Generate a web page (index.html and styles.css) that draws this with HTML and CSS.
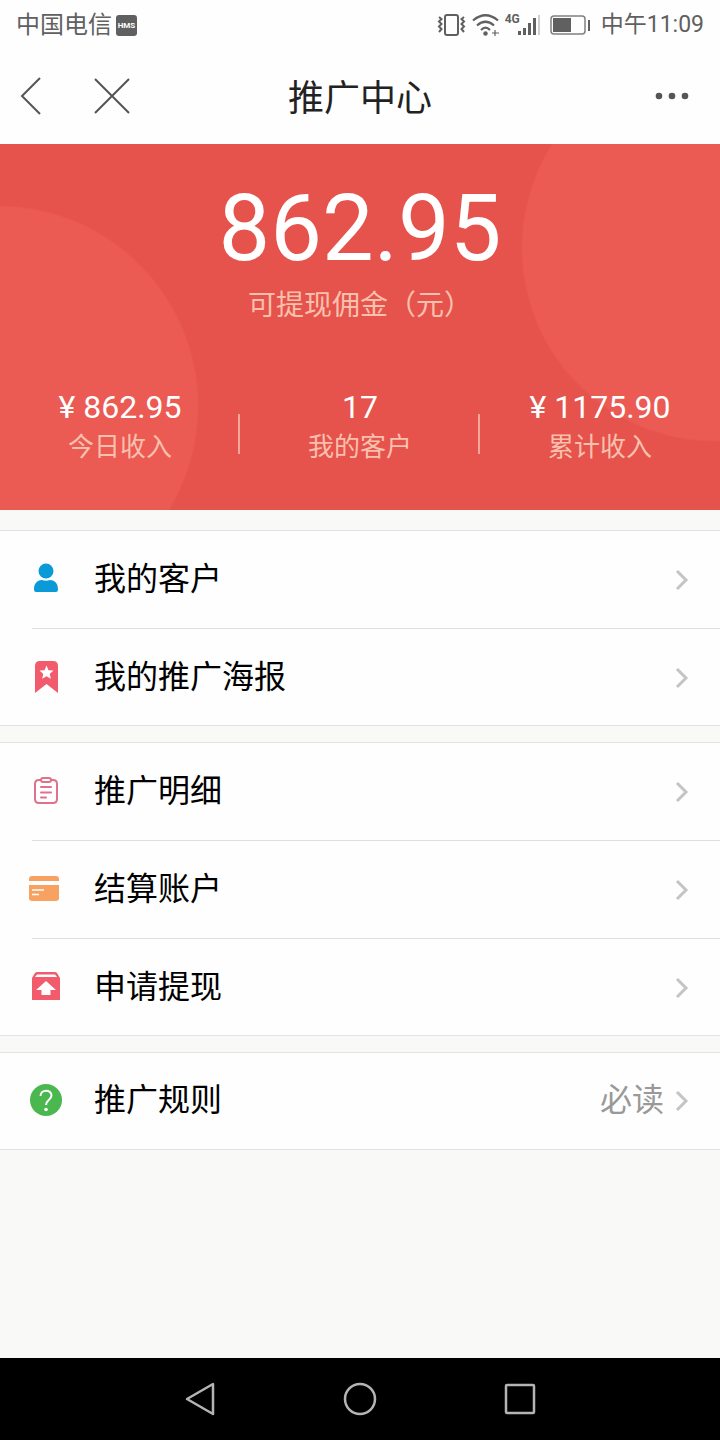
FILE: index.html
```html
<!DOCTYPE html>
<html lang="zh-CN">
<head>
  <meta charset="UTF-8" />
  <meta name="viewport" content="width=device-width, initial-scale=1.0" />
  <title>推广中心</title>
  <link rel="stylesheet" href="styles.css">
</head>
<body>
  <div class="status">
    <span>中国电信</span>
    <span class="hms">HMS</span>
    <div class="status-icons">
      <svg width="30" height="24" viewBox="0 0 30 24" fill="none" stroke="#606060" stroke-width="2">
        <rect x="8" y="2" width="13" height="20" rx="2" />
        <path d="M2 4L4.500 6L2 8.500L4.500 11L2 13.500L4.500 16L2 19M27 4L24.500 6L27 8.500L24.500 11L27 13.500L24.500 16L27 19" />
      </svg>
      <svg width="28" height="24" viewBox="0 0 28 24" fill="none" stroke="#606060" stroke-width="2.200">
        <path d="M1 7.500Q13.500 -3 26 7.500M5 12.500Q13.500 5 22 12.500M9 17Q13.500 12.500 18 17" />
        <circle cx="13.500" cy="20.500" r="2.200" fill="#606060" stroke="none" />
        <path d="M23 17V23M20 20H27" stroke-width="1.200" />
      </svg>
      <span class="net">4G</span>
      <svg class="signal" width="22" height="24" viewBox="0 0 22 24" fill="#606060">
        <rect x="0" y="18" width="3" height="4" />
        <rect x="5" y="15" width="3" height="7" />
        <rect x="10" y="10" width="3" height="12" />
        <rect x="15" y="5" width="3" height="17" />
        <rect x="20" y="2" width="2" height="20" fill="#cfcfcf" />
      </svg>
      <svg class="battery" width="41" height="24" viewBox="0 0 41 24">
        <rect x="1" y="3" width="34" height="18" rx="3" fill="none" stroke="#808080" stroke-width="1.500" />
        <rect x="3" y="5" width="18" height="14" fill="#606060" />
        <rect x="38" y="7" width="2" height="11" fill="#606060" />
      </svg>
    </div>
    <span class="time">中午11:09</span>
  </div>

  <header class="header">
    <div class="header-left">
      <button class="icon-btn" aria-label="返回">
        <svg width="40" height="40" viewBox="0 0 40 40" fill="none" stroke="#555" stroke-width="2"><path d="M28 2L10 20L28 38" /></svg>
      </button>
      <button class="icon-btn" aria-label="关闭">
        <svg width="40" height="40" viewBox="0 0 40 40" fill="none" stroke="#555" stroke-width="2"><path d="M3 3L37 37M37 3L3 37" /></svg>
      </button>
    </div>
    <h1>推广中心</h1>
    <div class="header-right">
      <button class="icon-btn" aria-label="更多">
        <svg width="40" height="40" viewBox="0 0 40 40" fill="#555"><circle cx="7" cy="20" r="3.300" /><circle cx="20" cy="20" r="3.300" /><circle cx="33" cy="20" r="3.300" /></svg>
      </button>
    </div>
  </header>

  <section class="hero">
    <div class="amount">862.95</div>
    <div class="amount-label">可提现佣金（元）</div>
    <div class="stats">
      <div class="stat">
        <div class="stat-num">¥ 862.95</div>
        <div class="stat-label">今日收入</div>
      </div>
      <div class="stat">
        <div class="stat-num">17</div>
        <div class="stat-label">我的客户</div>
      </div>
      <div class="stat">
        <div class="stat-num">¥ 1175.90</div>
        <div class="stat-label">累计收入</div>
      </div>
    </div>
  </section>

  <main>
    <nav class="group">
      <a class="row" href="#">
        <svg class="icon" viewBox="0 0 32 32" fill="#0b9ad8"><circle cx="16" cy="8" r="7.500" /><path d="M4 26C4 20 8 17 12 17Q16 18.500 20 17C24 17 28 20 28 26Q28 29 26 29H6Q4 29 4 26Z" /></svg>
        <span class="name">我的客户</span>
        <svg class="arrow" viewBox="0 0 16 24"><path d="M3 3L12 12L3 21" /></svg>
      </a>
      <a class="row" href="#">
        <svg class="icon" viewBox="0 0 32 32"><path d="M5 32V5Q5 0 10 0H23Q28 0 28 5V32L16.500 23Z" fill="#f15b6c" /><path d="M16.500 4.500L18.500 9.200L23.500 9.600L19.700 12.900L20.900 17.800L16.500 15.200L12.100 17.800L13.300 12.900L9.500 9.600L14.500 9.200Z" fill="#fff" /></svg>
        <span class="name">我的推广海报</span>
        <svg class="arrow" viewBox="0 0 16 24"><path d="M3 3L12 12L3 21" /></svg>
      </a>
    </nav>

    <nav class="group">
      <a class="row" href="#">
        <svg class="icon" viewBox="0 0 32 32" fill="none" stroke="#e0718a" stroke-width="2" stroke-linecap="round"><path d="M11 5H9Q5 5 5 9V24Q5 28 9 28H23Q27 28 27 24V9Q27 5 23 5H21" /><rect x="11" y="3" width="10" height="4" rx="2" /><path d="M11 12H21M11 17.500H21M11 22.500H16" /></svg>
        <span class="name">推广明细</span>
        <svg class="arrow" viewBox="0 0 16 24"><path d="M3 3L12 12L3 21" /></svg>
      </a>
      <a class="row" href="#">
        <svg class="icon icon-card" viewBox="0 0 32 32" fill="#f7a260"><path d="M1 8V6Q1 3 4 3H28Q31 3 31 6V8Z" /><path d="M1 12H31V25Q31 28 28 28H4Q1 28 1 25Z" /><path d="M4 17H16M4 21.500H11" stroke="#fff" stroke-width="1.500" /></svg>
        <span class="name">结算账户</span>
        <svg class="arrow" viewBox="0 0 16 24"><path d="M3 3L12 12L3 21" /></svg>
      </a>
      <a class="row" href="#">
        <svg class="icon" viewBox="0 0 32 32"><path d="M2 7L5 2Q6 1 7 1H25Q26 1 27 2L30 7V29H2Z" fill="#f15b6c" /><path d="M5 6L7 3.500H25L27 6Z" fill="#fff" /><path d="M16 10L26 19H20.500V24H11.500V19H6Z" fill="#fff" /></svg>
        <span class="name">申请提现</span>
        <svg class="arrow" viewBox="0 0 16 24"><path d="M3 3L12 12L3 21" /></svg>
      </a>
    </nav>

    <nav class="group">
      <a class="row" href="#">
        <svg class="icon" viewBox="0 0 32 32"><circle cx="16" cy="16" r="16" fill="#4ab84e" /><path d="M10.500 12C10.500 5 21.500 5 21.500 11.500C21.500 15.500 16 16 16 21" fill="none" stroke="#fff" stroke-width="2" /><circle cx="16" cy="25.500" r="1.800" fill="#fff" /></svg>
        <span class="name">推广规则</span>
        <span class="note">必读</span>
        <svg class="arrow" viewBox="0 0 16 24"><path d="M3 3L12 12L3 21" /></svg>
      </a>
    </nav>
  </main>

  <footer class="keys">
    <button aria-label="后退"><svg width="40" height="40" viewBox="0 0 40 40"><path d="M33 5V35L7 20Z" /></svg></button>
    <button aria-label="主页"><svg width="40" height="40" viewBox="0 0 40 40"><circle cx="20" cy="20" r="15" /></svg></button>
    <button aria-label="最近任务"><svg width="40" height="40" viewBox="0 0 40 40"><rect x="6" y="6" width="28" height="28" rx="1" /></svg></button>
  </footer>
</body>
</html>
```

FILE: styles.css
```css
* { margin: 0; padding: 0; box-sizing: border-box; }
body {
  display: flex;
  flex-direction: column;
  min-height: 100vh;
  font-family: Roboto, "Noto Sans CJK SC", sans-serif;
  background: #f9f9f8;
  color: #000;
}
button {
  border: none;
  background: none;
  cursor: pointer;
}
svg { display: block; flex: none; }

.status {
  display: flex;
  align-items: center;
  height: 48px;
  padding: 2px 16px 0;
  background: #fefefe;
  color: #606060;
  font-size: 24px;
  line-height: 48px;
}
.time { font-size: 23px; }
.hms {
  width: 21px;
  height: 21px;
  margin-left: 4px;
  border-radius: 3px;
  background: #606060;
  color: #fff;
  font-size: 8px;
  font-weight: 700;
  line-height: 21px;
  text-align: center;
}
.status-icons {
  display: flex;
  align-items: center;
  gap: 5px;
  margin-left: auto;
  margin-right: 10px;
}
.net {
  align-self: flex-start;
  font-size: 12px;
  font-weight: 700;
  line-height: 12px;
}
.signal { margin-left: -7px; }
.battery { margin-left: 5px; }

.header {
  display: flex;
  align-items: center;
  height: 96px;
  padding: 0 12px;
  background: #fefefe;
}
.header-left, .header-right { flex: 1; display: flex; gap: 40px; }
.header-right { justify-content: flex-end; }
.header-right .icon-btn { margin-right: 16px; }
.header h1 {
  padding-top: 6px;
  font-size: 36px;
  font-weight: 400;
  line-height: 48px;
  color: #222;
}

.hero {
  padding: 35px 0 43px;
  background:
    radial-gradient(circle at -2px 262px, #eb5a53 199px, transparent 201px),
    radial-gradient(circle at calc(100% - 5px) 104px, #eb5a53 192px, transparent 194px),
    #e5534c;
  color: #fff;
  text-align: center;
}
.amount {
  font-size: 92px;
  line-height: 100px;
}
.amount-label {
  margin-top: 7px;
  font-size: 28px;
  line-height: 40px;
  color: #f9c0ae;
}
.stats {
  display: flex;
  margin-top: 61px;
}
.stat {
  flex: 1;
  background: linear-gradient(#f4a698, #f4a698) right 27px / 2px 40px no-repeat;
}
.stat:last-child { background: none; }
.stat-num {
  font-size: 32px;
  line-height: 40px;
}
.stat-label {
  font-size: 26px;
  line-height: 40px;
  color: #f9c0ae;
}

main {
  flex: 1;
  display: flex;
  flex-direction: column;
  gap: 16px;
  padding-top: 20px;
}
.group {
  background: #fefefe;
  border-top: 1px solid #e2e4e4;
  border-bottom: 1px solid #e2e4e4;
}
.row {
  display: flex;
  align-items: center;
  height: 97px;
  padding: 0 30px 2px;
  color: #000;
  font-size: 32px;
  line-height: 48px;
  text-decoration: none;
}
.row + .row {
  padding-bottom: 0;
  background: linear-gradient(#dcdfe0, #dcdfe0) 32px 0 / 100% 1px no-repeat;
}
.row + .row:not(:last-child) { height: 98px; }
.row:only-child { height: 96px; }
.icon {
  width: 32px;
  height: 32px;
  margin-right: 32px;
}
.icon-card { margin-left: -2px; margin-right: 34px; }
.note {
  margin-left: auto;
  margin-right: 10px;
  color: #999;
}
.name + .arrow { margin-left: auto; }
.arrow {
  width: 16px;
  height: 24px;
  margin-top: 2px;
  fill: none;
  stroke: #c4c4c4;
  stroke-width: 3;
}

.keys {
  display: flex;
  justify-content: center;
  height: 82px;
  background: #000;
}
.keys button {
  width: 160px;
  display: flex;
  align-items: center;
  justify-content: center;
}
.keys svg {
  fill: none;
  stroke: #b4b4b4;
  stroke-width: 2.5;
  stroke-linejoin: round;
}
```
